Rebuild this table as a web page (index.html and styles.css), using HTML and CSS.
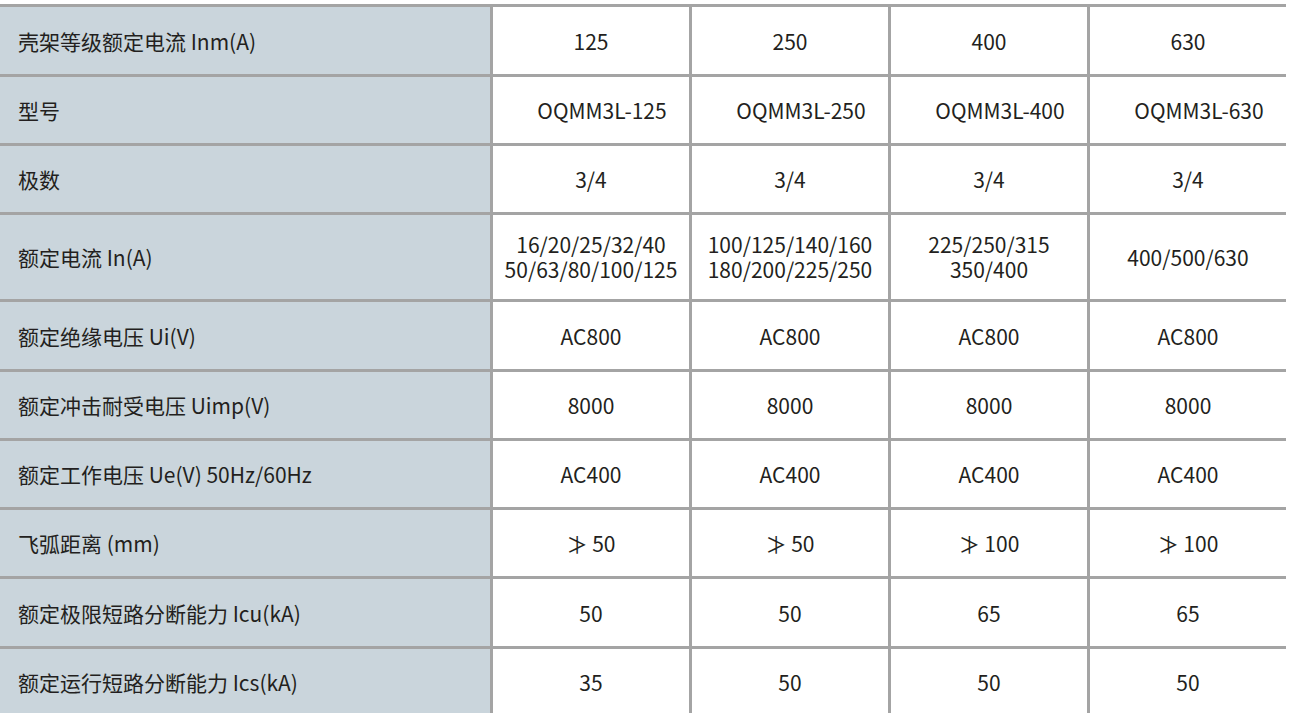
FILE: index.html
```html
<!DOCTYPE html>
<html lang="zh-CN">
<head>
<meta charset="utf-8">
<title>参数表</title>
<link rel="stylesheet" href="styles.css">
</head>
<body>
<div class="spec">
  <div class="label">壳架等级额定电流 Inm(A)</div>
  <div class="val">125</div><div class="val">250</div><div class="val">400</div><div class="val">630</div>

  <div class="label">型号</div>
  <div class="val model">OQMM3L-125</div><div class="val model">OQMM3L-250</div><div class="val model">OQMM3L-400</div><div class="val model">OQMM3L-630</div>

  <div class="label">极数</div>
  <div class="val">3/4</div><div class="val">3/4</div><div class="val">3/4</div><div class="val">3/4</div>

  <div class="label">额定电流 In(A)</div>
  <div class="val two">16/20/25/32/40<br>50/63/80/100/125</div>
  <div class="val two">100/125/140/160<br>180/200/225/250</div>
  <div class="val two">225/250/315<br>350/400</div>
  <div class="val">400/500/630</div>

  <div class="label">额定绝缘电压 Ui(V)</div>
  <div class="val">AC800</div><div class="val">AC800</div><div class="val">AC800</div><div class="val">AC800</div>

  <div class="label">额定冲击耐受电压 Uimp(V)</div>
  <div class="val">8000</div><div class="val">8000</div><div class="val">8000</div><div class="val">8000</div>

  <div class="label">额定工作电压 Ue(V) 50Hz/60Hz</div>
  <div class="val">AC400</div><div class="val">AC400</div><div class="val">AC400</div><div class="val">AC400</div>

  <div class="label">飞弧距离 (mm)</div>
  <div class="val">≯ 50</div><div class="val">≯ 50</div><div class="val">≯ 100</div><div class="val">≯ 100</div>

  <div class="label">额定极限短路分断能力 Icu(kA)</div>
  <div class="val">50</div><div class="val">50</div><div class="val">65</div><div class="val">65</div>

  <div class="label">额定运行短路分断能力 Ics(kA)</div>
  <div class="val">35</div><div class="val">50</div><div class="val">50</div><div class="val">50</div>
</div>
</body>
</html>
```

FILE: styles.css
```css
html, body {
  margin: 0;
  padding: 0;
  background: #ffffff;
}

body {
  padding-top: 4px;
  font-family: "Noto Sans CJK SC", "Noto Sans", sans-serif;
  font-size: 21px;
  color: #231f20;
}

.spec {
  display: grid;
  width: 1286px;
  grid-template-columns: 490px repeat(4, 196px);
  grid-template-rows: 67px 66px 66px 84px 67px 66px 66px 66px 67px 66px;
  gap: 3px;
  padding-top: 3px;
  background: #a4a4a4;
}

.label {
  background: #cad5dc;
  display: flex;
  align-items: center;
  padding-left: 18px;
  white-space: nowrap;
}

.val {
  background: #ffffff;
  display: flex;
  align-items: center;
  justify-content: center;
  text-align: center;
  white-space: nowrap;
}

.model {
  padding-left: 22px;
}

.two {
  line-height: 25px;
}
```
